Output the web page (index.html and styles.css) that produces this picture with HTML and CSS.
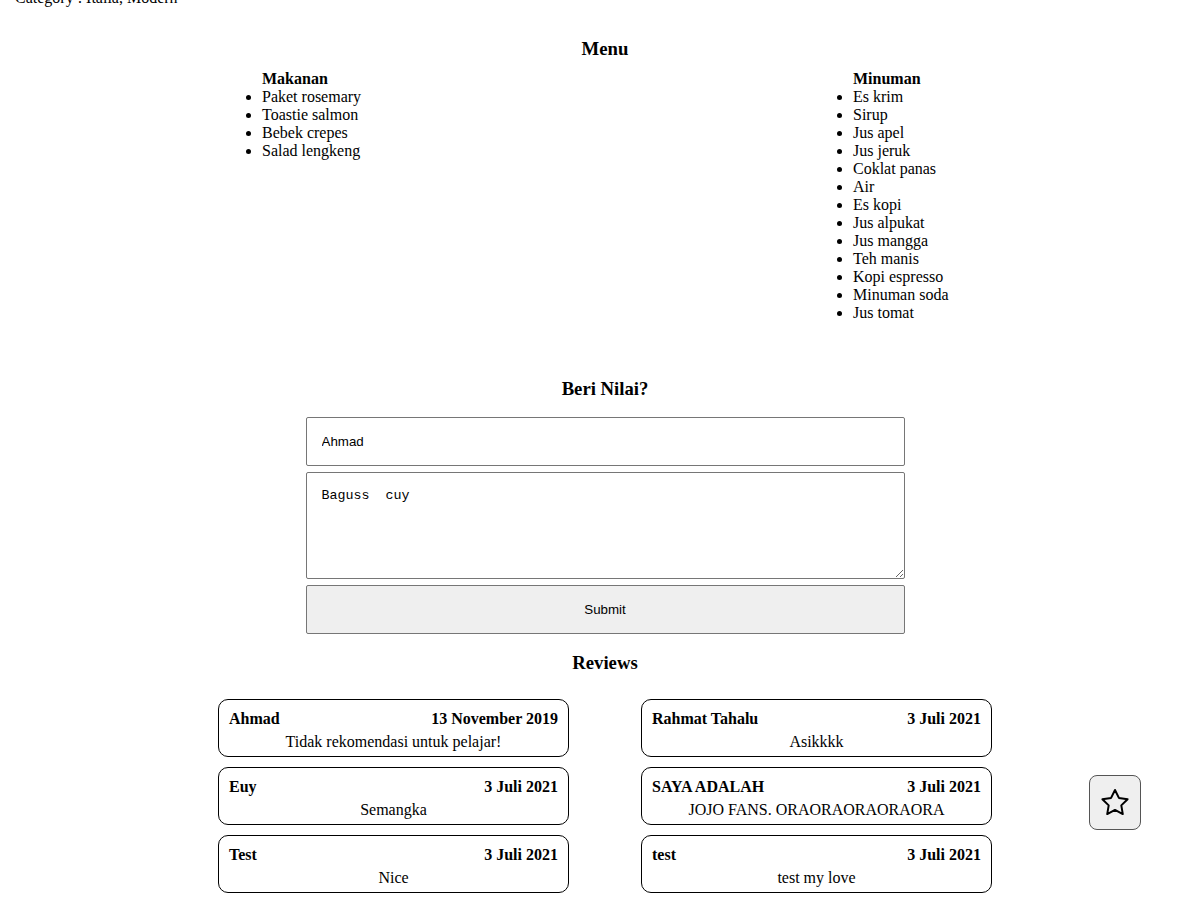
FILE: index.html
```html
<!DOCTYPE html>
<html>
<head>
<meta charset="utf-8">
<link rel="stylesheet" href="styles.css">
</head>
<body>
<div class="page">
  <p class="category">Category : Italia, Modern</p>

  <section class="menu">
    <h3 class="title">Menu</h3>
    <div class="menu-cols">
      <ul class="menu-list">
        <li class="menu-head">Makanan</li>
        <li>Paket rosemary</li>
        <li>Toastie salmon</li>
        <li>Bebek crepes</li>
        <li>Salad lengkeng</li>
      </ul>
      <ul class="menu-list second">
        <li class="menu-head">Minuman</li>
        <li>Es krim</li>
        <li>Sirup</li>
        <li>Jus apel</li>
        <li>Jus jeruk</li>
        <li>Coklat panas</li>
        <li>Air</li>
        <li>Es kopi</li>
        <li>Jus alpukat</li>
        <li>Jus mangga</li>
        <li>Teh manis</li>
        <li>Kopi espresso</li>
        <li>Minuman soda</li>
        <li>Jus tomat</li>
      </ul>
    </div>
  </section>

  <section class="rate">
    <h3 class="title">Beri Nilai?</h3>
    <form class="rate-form">
      <input class="field" type="text" value="Ahmad">
      <textarea class="field area" spellcheck="true">Baguss  cuy</textarea>
      <button class="submit" type="button">Submit</button>
    </form>
  </section>

  <section class="reviews">
    <h3 class="title">Reviews</h3>
    <div class="review-grid">
      <div class="card"><div class="card-head"><b>Ahmad</b><b>13 November 2019</b></div><div class="card-body">Tidak rekomendasi untuk pelajar!</div></div>
      <div class="card"><div class="card-head"><b>Rahmat Tahalu</b><b>3 Juli 2021</b></div><div class="card-body">Asikkkk</div></div>
      <div class="card"><div class="card-head"><b>Euy</b><b>3 Juli 2021</b></div><div class="card-body">Semangka</div></div>
      <div class="card"><div class="card-head"><b>SAYA ADALAH</b><b>3 Juli 2021</b></div><div class="card-body">JOJO FANS. ORAORAORAORAORA</div></div>
      <div class="card"><div class="card-head"><b>Test</b><b>3 Juli 2021</b></div><div class="card-body">Nice</div></div>
      <div class="card"><div class="card-head"><b>test</b><b>3 Juli 2021</b></div><div class="card-body">test my love</div></div>
    </div>
  </section>
</div>

<button class="fav" type="button" aria-label="Favorit">
  <svg width="34" height="34" viewBox="0 0 24 24" fill="none" stroke="#000" stroke-width="1.4" stroke-linejoin="round" stroke-linecap="round">
    <path d="M12 2.8l2.75 5.6 6.15.9-4.45 4.35 1.05 6.15L12 16.9l-5.5 2.9 1.05-6.15L3.1 9.3l6.15-.9z"/>
  </svg>
</button>
</body>
</html>
```

FILE: styles.css
```css
html, body {
  margin: 0;
  padding: 0;
  background: #fff;
}
body {
  font-family: "Liberation Serif", "Times New Roman", serif;
  font-size: 16px;
  color: #000;
  overflow: hidden;
}
.page {
  padding: 0 5px 0 15px;
  margin-top: -11px;
}
.category {
  margin: 0;
  line-height: 18px;
}
.title {
  font-size: 18.72px;
  font-weight: bold;
  text-align: center;
  margin: 0;
  line-height: 22px;
}
.menu {
  margin-top: 31px;
}
.menu-cols {
  display: grid;
  grid-template-columns: 1fr 1fr;
  margin-top: 10px;
}
.menu-list {
  margin: 0;
  padding: 0 0 0 247px;
  line-height: 18px;
}
.menu-list.second {
  padding-left: 248px;
}
.menu-head {
  list-style: none;
  font-weight: bold;
}
.rate {
  margin-top: 56px;
}
.rate-form {
  width: 599px;
  margin: 17px auto 0;
  display: flex;
  flex-direction: column;
  gap: 6px;
}
.field {
  box-sizing: border-box;
  width: 100%;
  height: 49px;
  border: 1px solid #767676;
  border-radius: 2px;
  padding: 0 15px;
  font-family: "Liberation Sans", Arial, sans-serif;
  font-size: 13.33px;
  color: #000;
  background: #fff;
  margin: 0;
}
.area {
  height: 107px;
  padding: 15px;
  font-family: "Liberation Mono", "DejaVu Sans Mono", monospace;
  font-size: 13.33px;
  resize: vertical;
}
.submit {
  box-sizing: border-box;
  height: 49px;
  width: 100%;
  border: 1px solid #767676;
  border-radius: 2px;
  background: #efefef;
  font-family: "Liberation Sans", Arial, sans-serif;
  font-size: 13.33px;
  color: #000;
  margin: 0;
}
.reviews {
  margin-top: 18px;
}
.review-grid {
  width: 774px;
  margin: 25px auto 0;
  display: grid;
  grid-template-columns: 351px 351px;
  column-gap: 72px;
  row-gap: 10px;
}
.card {
  box-sizing: border-box;
  height: 58px;
  border: 1px solid #000;
  border-radius: 10px;
  padding: 9px 10px 0;
}
.card-head {
  display: flex;
  justify-content: space-between;
  line-height: 20px;
}
.card-body {
  text-align: center;
  line-height: 26px;
  margin-top: 0;
}
.fav {
  position: fixed;
  left: 1089px;
  top: 775px;
  width: 52px;
  height: 55px;
  box-sizing: border-box;
  border: 1px solid #555;
  border-radius: 8px;
  background: #efefef;
  display: flex;
  align-items: center;
  justify-content: center;
  padding: 0;
}
```
